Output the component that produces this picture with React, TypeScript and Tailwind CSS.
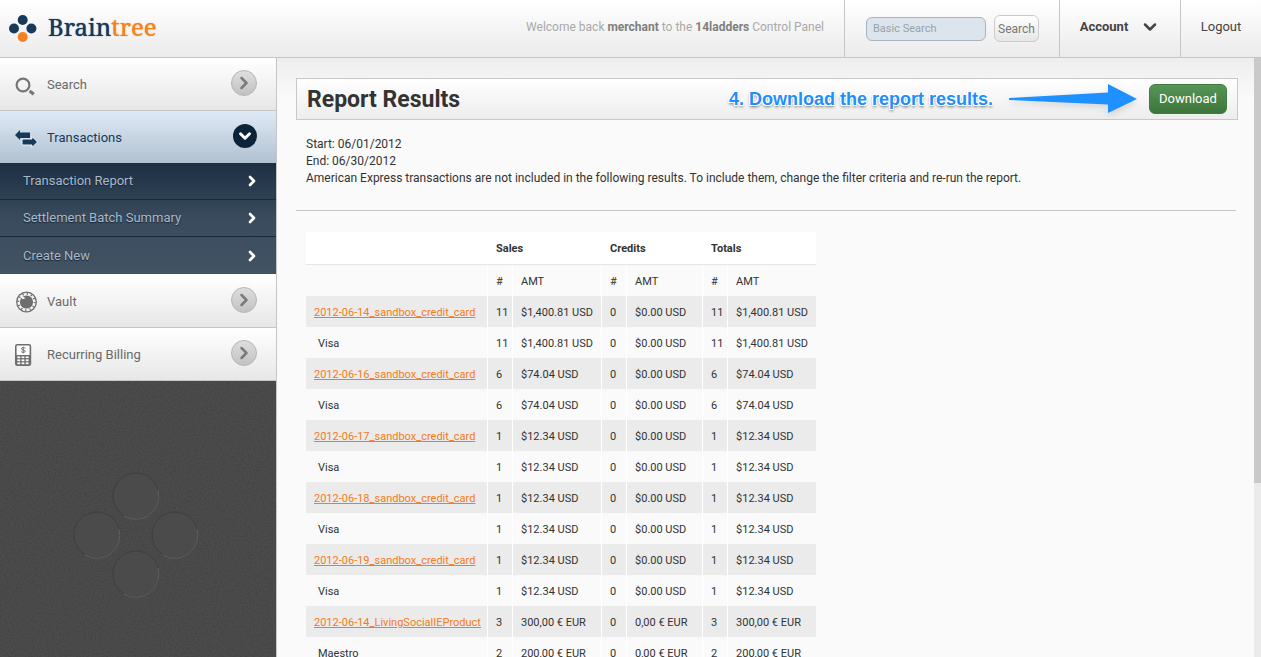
import { useState } from "react";
import { ChevronDown, ChevronRight } from "lucide-react";

const USD_ROWS = [
  { batch: "2012-06-14_sandbox_credit_card", brand: "Visa", count: "11", amount: "$1,400.81 USD" },
  { batch: "2012-06-16_sandbox_credit_card", brand: "Visa", count: "6", amount: "$74.04 USD" },
  { batch: "2012-06-17_sandbox_credit_card", brand: "Visa", count: "1", amount: "$12.34 USD" },
  { batch: "2012-06-18_sandbox_credit_card", brand: "Visa", count: "1", amount: "$12.34 USD" },
  { batch: "2012-06-19_sandbox_credit_card", brand: "Visa", count: "1", amount: "$12.34 USD" },
];

const rows = [
  ...USD_ROWS.flatMap(({ batch, brand, count, amount }) => [
    { name: batch, isBatch: true, count, amount, credit: "$0.00 USD" },
    { name: brand, isBatch: false, count, amount, credit: "$0.00 USD" },
  ]),
  { name: "2012-06-14_LivingSocialIEProduct", isBatch: true, count: "3", amount: "300,00 € EUR", credit: "0,00 € EUR" },
  { name: "Maestro", isBatch: false, count: "2", amount: "200,00 € EUR", credit: "0,00 € EUR" },
];

function Logo() {
  return (
    <a href="#" className="flex items-center gap-2.5 pl-2" aria-label="Braintree">
      <svg width="30" height="30" viewBox="0 0 30 30">
        <circle cx="14.7" cy="6" r="5" fill="#17395a" />
        <circle cx="6" cy="14.5" r="5" fill="#17395a" />
        <circle cx="23.4" cy="14.5" r="5" fill="#17395a" />
        <circle cx="14.7" cy="23" r="5" fill="#f58220" />
      </svg>
      <span className="pb-1 font-['Noto_Serif','Liberation_Serif',serif] text-2xl text-[#17395a] [text-shadow:0_0_1px_currentColor]">
        Brain<span className="text-[#f58220]">tree</span>
      </span>
    </a>
  );
}

function SearchIcon() {
  return (
    <svg width="22" height="22" viewBox="0 0 22 22" fill="none" stroke="#757575">
      <circle cx="8" cy="11" r="6.4" strokeWidth="2.2" />
      <path d="M14.6 17l4.2 3.2" strokeWidth="3.2" />
    </svg>
  );
}

function TransferIcon() {
  return (
    <svg width="23" height="24" viewBox="0 0 23 24" fill="#17395a">
      <path d="M0 9l5-5v2.500h10V12H5v2z" />
      <path d="M22.500 16l-5.500 5.500V19H7v-6h10v-2.500z" stroke="#eef4fa" strokeWidth="1" />
    </svg>
  );
}

function VaultIcon() {
  return (
    <svg width="22" height="22" viewBox="0 0 22 22" fill="none">
      <circle cx="11.500" cy="11" r="9.800" fill="#f5f5f5" stroke="#6e6e6e" strokeWidth="1.300" />
      <circle cx="11.500" cy="11" r="8.200" stroke="#6e6e6e" strokeWidth="2" strokeDasharray="1.200 3.090" />
      <circle cx="11.500" cy="11" r="6.600" fill="#6e6e6e" />
      <path d="M6.500 4.500l4 2.700-2.600 1-2.200-1.800z" fill="#f3f3f3" />
    </svg>
  );
}

function BillingIcon() {
  return (
    <svg width="22" height="24" viewBox="0 0 22 24">
      <rect x="0.8" y="1.8" width="14.6" height="20.4" rx="1.5" fill="#fff" stroke="#6e6e6e" strokeWidth="1.6" />
      <rect x="1" y="12" width="14" height="10" fill="#6e6e6e" />
      {[13.4, 16.4, 19.4].map((y) =>
        [2.4, 6.6, 10.8].map((x) => <rect key={`${x}-${y}`} x={x} y={y} width="2.8" height="1.8" fill="#fff" />)
      )}
      <path d="M10.4 5.2c-1.2-1-4-.9-4 .6 0 1.7 3.8.7 3.8 2.4 0 1.5-2.7 1.5-4 .5M8.2 3.8v6.5" fill="none" stroke="#6e6e6e" strokeWidth="1" />
    </svg>
  );
}

function NavItem({ icon, label, open = false }: { icon: React.ReactNode; label: string; open?: boolean }) {
  return (
    <button
      type="button"
      aria-expanded={open}
      className={`flex w-full items-center pt-0.5 pr-[19px] pl-[15px] text-left text-[13px] ${
        open
          ? "h-[52px] bg-linear-to-b from-[#dfeaf6] to-[#b0c1d1] text-[#17395a]"
          : "h-[53px] border-b border-[#c6c6c6] bg-linear-to-b from-white to-[#e7e7e7] text-[#6a6a6a]"
      }`}
    >
      <span className="w-8">{icon}</span>
      <span className="flex-1">{label}</span>
      {open ? (
        <span className="mb-1 flex size-6 items-center justify-center rounded-full bg-[#0d2438] text-white">
          <ChevronDown size={18} strokeWidth={4} />
        </span>
      ) : (
        <span className="mb-1 flex size-[26px] items-center justify-center rounded-full border border-[#b5b5b5] bg-linear-to-b from-[#dedede] to-[#c2c2c2] text-[#7a7a7a]">
          <ChevronRight size={20} strokeWidth={3} />
        </span>
      )}
    </button>
  );
}

function Sidebar() {
  return (
    <aside className="relative w-[277px] shrink-0 overflow-hidden border-r border-[#c6c6c6] bg-[#4b4b4b]">
      <svg className="absolute inset-0 size-full" aria-hidden="true">
        <filter id="grain">
          <feTurbulence type="fractalNoise" baseFrequency="0.6" numOctaves="2" />
          <feColorMatrix values="0 0 0 0 0  0 0 0 0 0  0 0 0 0 0  1.4 0 0 0 -0.6" />
        </filter>
        <rect width="100%" height="100%" filter="url(#grain)" opacity="0.2" />
        {[
          [136, 438],
          [97, 477],
          [175, 477],
          [136, 516],
        ].map(([cx, cy]) => (
          <g key={`${cx}-${cy}`} fill="none">
            <circle cx={cx} cy={cy} r="23" fill="#4b4b4b" stroke="#3f3f3f" />
            <path d={`M${cx + 22} ${cy - 6}A23 23 0 0 1 ${cx - 12} ${cy + 20}`} stroke="#606060" />
          </g>
        ))}
      </svg>
      <nav className="relative">
        <NavItem icon={<SearchIcon />} label="Search" />
        <NavItem icon={<TransferIcon />} label="Transactions" open />
        <div className="border-b border-white bg-linear-to-b from-[#1d3043] via-[#394b5d] to-[#425363]">
          {["Transaction Report", "Settlement Batch Summary", "Create New"].map((label) => (
            <a
              key={label}
              href="#"
              className="flex h-[37px] items-center justify-between border-b border-[#172a3e] pr-4 pl-[23px] text-[13px] text-[#a9b9c9] last:border-b-0 [text-shadow:0_1px_1px_#142536]"
            >
              {label}
              <ChevronRight size={16} strokeWidth={4} className="text-white" />
            </a>
          ))}
        </div>
        <NavItem icon={<VaultIcon />} label="Vault" />
        <NavItem icon={<BillingIcon />} label="Recurring Billing" />
      </nav>
    </aside>
  );
}

function Header() {
  const [query, setQuery] = useState("");

  return (
    <header className="flex h-[58px] shrink-0 items-stretch border-b border-[#c6c6c6] bg-linear-to-b from-white to-[#ebebeb]">
      <Logo />
      <p className="flex-1 self-center pr-5 pb-1 text-right text-xs text-[#a9a9a9]">
        Welcome back <b className="text-[#7f7f7f]">merchant</b> to the <b className="text-[#7f7f7f]">14ladders</b> Control Panel
      </p>
      <form className="flex items-center gap-2 border-l border-[#c6c6c6] pr-5 pl-[21px]" onSubmit={(e) => e.preventDefault()}>
        <input
          type="text"
          aria-label="Basic Search"
          placeholder="Basic Search"
          value={query}
          onChange={(e) => setQuery(e.target.value)}
          className="h-6 w-[120px] rounded-md border border-[#a9b4bd] bg-[#dce5ed] px-1.5 text-[11px] placeholder:text-[#99a1a8]"
        />
        <button type="submit" className="h-[27px] w-[45px] rounded-md border border-[#cccccc] bg-linear-to-b from-white to-[#e6e6e6] text-xs text-[#777777]">
          Search
        </button>
      </form>
      <button type="button" className="flex w-[121px] items-center justify-center gap-3 border-l border-[#c6c6c6] pb-1 text-[13px] font-bold text-[#444444]">
        Account
        <ChevronDown size={20} strokeWidth={3} />
      </button>
      <a href="#" className="flex w-[81px] items-center justify-center border-l border-[#c6c6c6] pb-1 text-[13px] text-[#444444]">
        Logout
      </a>
    </header>
  );
}

function ReportTable() {
  return (
    <table className="mt-[21px] ml-[10px] w-[510px] table-fixed border-separate border-spacing-0 text-left text-[11px] leading-4">
      <colgroup>
        <col className="w-[182px]" />
        <col className="w-[25px]" />
        <col className="w-[89px]" />
        <col className="w-[25px]" />
        <col className="w-[76px]" />
        <col className="w-[25px]" />
        <col className="w-[88px]" />
      </colgroup>
      <thead>
        <tr className="h-[33px] bg-white">
          <th className="border-b border-[#e6e6e6]" />
          {["Sales", "Credits", "Totals"].map((title) => (
            <th key={title} colSpan={2} className="border-b border-[#e6e6e6] pt-0.5 pl-2 font-bold">
              {title}
            </th>
          ))}
        </tr>
        <tr className="h-[31px]">
          <th className="border-r border-white" />
          {["#", "AMT", "#", "AMT", "#", "AMT"].map((title, i) => (
            <th key={i} className="border-r border-white pt-0.5 pl-2 font-normal last:border-r-0">
              {title}
            </th>
          ))}
        </tr>
      </thead>
      <tbody>
        {rows.map((row, i) => (
          <tr key={i} className={`h-[31px] ${row.isBatch ? "bg-[#ebebeb]" : ""}`}>
            <td className={`border-r border-white pt-0.5 ${row.isBatch ? "pl-2" : "pl-3"}`}>
              {row.isBatch ? (
                <a href="#" className="text-[#f47b20] underline">
                  {row.name}
                </a>
              ) : (
                row.name
              )}
            </td>
            {[row.count, row.amount, "0", row.credit, row.count, row.amount].map((value, j) => (
              <td key={j} className="border-r border-white pt-0.5 pl-2 whitespace-nowrap last:border-r-0">
                {value}
              </td>
            ))}
          </tr>
        ))}
      </tbody>
    </table>
  );
}

export default function App() {
  return (
    <div className="flex h-screen flex-col overflow-hidden bg-[#fafafa] font-[Roboto,'Liberation_Sans',sans-serif] text-[#333333]">
      <Header />
      <div className="flex min-h-0 flex-1">
        <Sidebar />
        <main className="min-w-0 flex-1 overflow-hidden bg-linear-to-b from-[#eeeeee] to-[#fafafa] to-[40px] pt-5 pr-4 pl-[19px]">
          <div className="flex h-[42px] items-center border border-[#c8c8c8] bg-linear-to-b from-white to-[#ededed] px-[10px]">
            <h1 className="flex-1 pt-0.5 text-[23px] font-bold">Report Results</h1>
            {/* Step callout pointing at the button */}
            <span className="font-['Liberation_Sans',sans-serif] text-lg font-bold text-[#1f8ffb] [text-shadow:1px_1px_0_#fff,-1px_-1px_0_#fff,1px_-1px_0_#fff,-1px_1px_0_#fff,0_2px_3px_#666]">
              4. Download the report results.
            </span>
            <svg className="mr-3 ml-4 drop-shadow-md" width="128" height="32" viewBox="0 0 128 32">
              <path d="M0 15L99 9.500V1L128 16L99 30V21.500L0 17z" fill="#1e90ff" />
            </svg>
            <button type="button" className="h-[30px] w-[78px] rounded-md border border-[#3f7c3d] bg-linear-to-b from-[#579557] to-[#3c763a] text-[13px] text-white">
              Download
            </button>
          </div>
          <div className="mr-0.5 border-b border-[#c8c8c8] pt-4 pb-[23px] pl-[10px] text-xs leading-[17px]">
            <p>Start: 06/01/2012</p>
            <p>End: 06/30/2012</p>
            <p>American Express transactions are not included in the following results. To include them, change the filter criteria and re-run the report.</p>
          </div>
          <ReportTable />
        </main>
        <div className="w-[7px] shrink-0 bg-[#ebebeb]">
          <div className="h-[71%] bg-[#c9c9c9]" />
        </div>
      </div>
    </div>
  );
}
